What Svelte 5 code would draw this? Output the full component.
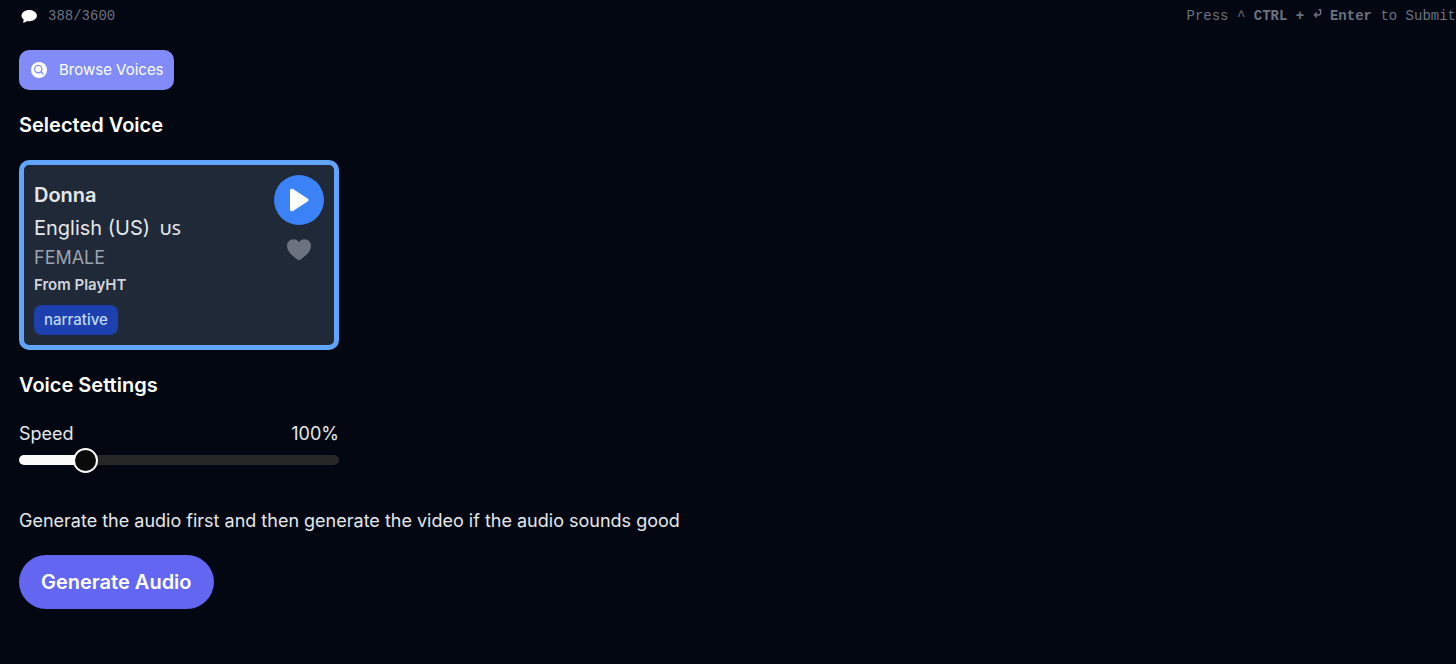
<script>
  let characters = 388;
  let maxCharacters = 3600;

  let voice = {
    name: "Donna",
    language: "English (US)",
    country: "US",
    gender: "FEMALE",
    provider: "PlayHT",
    tags: ["narrative"],
  };

  const minSpeed = 10;
  const maxSpeed = 500;
  let speed = 100;
  let liked = false;

  $: filled = ((speed - minSpeed) / (maxSpeed - minSpeed)) * 100;
</script>

<main>
  <div class="status">
    <span class="counter">
      <svg width="16" height="13" viewBox="0 0 16 13" fill="#fff" aria-hidden="true">
        <path
          d="M8.200 0C3.900 0 .5 2.500 .5 5.600C.5 7.200 1.300 8.500 2.600 9.500C2.700 10.700 2.300 11.700 1.800 12.600C3.600 12.600 5.100 11.800 6 10.900C6.700 11.100 7.400 11.200 8.200 11.200C12.500 11.200 15.900 8.700 15.900 5.600S12.500 0 8.200 0Z"
        />
      </svg>
      {characters}/{maxCharacters}
    </span>
    <span class="hint">
      Press <kbd>^ <b>CTRL</b></kbd> <b>+</b>
      <svg width="9" height="11" viewBox="0 0 9 11" fill="none" stroke="currentColor" stroke-width="1.4" aria-hidden="true">
        <path d="M5.500 .7H7.600V3.800Q7.600 6 5.400 6H1.500M4 3.500L1.400 6L4 8.500" />
      </svg>
      <kbd><b>Enter</b></kbd> to Submit
    </span>
  </div>

  <button class="browse">
    <svg width="16" height="16" viewBox="0 0 16 16" aria-hidden="true">
      <circle cx="8" cy="8" r="8" fill="#fff" />
      <g fill="none" stroke="#818cf8" stroke-width="1.3" stroke-linecap="round">
        <circle cx="7.2" cy="7.1" r="3.7" />
        <path d="M9.900 9.800L12 12" />
      </g>
    </svg>
    <span>Browse Voices</span>
  </button>

  <h2>Selected Voice</h2>

  <div class="card">
    <div class="info">
      <h3>{voice.name}</h3>
      <p class="language">{voice.language} <span>{voice.country}</span></p>
      <p class="gender">{voice.gender}</p>
      <p class="provider">From {voice.provider}</p>
      <div class="tags">
        {#each voice.tags as tag (tag)}
          <span class="tag">{tag}</span>
        {/each}
      </div>
    </div>
    <div class="actions">
      <button class="play" aria-label="Play sample">
        <svg width="20" height="24" viewBox="0 0 20 24" fill="#fff" aria-hidden="true">
          <path d="M1 2.6C1 1 2.7.3 4 1.1L18.600 10.400C19.900 11.200 19.900 12.800 18.600 13.600L4 22.900C2.700 23.700 1 23 1 21.400Z" />
        </svg>
      </button>
      <button class="like" class:liked aria-label="Favorite" on:click={() => (liked = !liked)}>
        <svg width="24" height="22" viewBox="0 0 24 22" fill="currentColor" aria-hidden="true">
          <path
            d="M12 21.500C11.500 21.500 8.500 19.300 6.300 17.300C2.500 14 0 11 0 7C0 3.200 2.800.3 6.500.3C8.800.3 10.800 1.400 12 3.200C13.200 1.400 15.200.3 17.500.3C21.200.3 24 3.200 24 7C24 11 21.500 14 17.700 17.300C15.500 19.300 12.500 21.500 12 21.500Z"
          />
        </svg>
      </button>
    </div>
  </div>

  <h2>Voice Settings</h2>

  <div class="setting">
    <div class="setting-label">
      <label for="speed">Speed</label>
      <output for="speed">{speed}%</output>
    </div>
    <input
      id="speed"
      type="range"
      min={minSpeed}
      max={maxSpeed}
      bind:value={speed}
      style="--filled: {filled}%"
    />
  </div>

  <p class="note">
    Generate the audio first and then generate the video if the audio sounds good
  </p>

  <button class="generate">Generate Audio</button>
</main>

<style>
  :global(body) {
    background: #030711;
  }
  main {
    padding: 5px 0 55px 19px;
    color: #e5e7eb;
    font-family: Inter, sans-serif;
    font-size: 18px;
    line-height: 28px;
  }
  h2,
  h3,
  p {
    margin: 0;
  }
  button {
    border: none;
    padding: 0;
    font-family: inherit;
    cursor: pointer;
  }
  svg {
    display: block;
    flex: none;
  }

  .status {
    display: flex;
    justify-content: space-between;
    color: #6b7280;
    font-family: "Liberation Mono", monospace;
    font-size: 14px;
    line-height: 22px;
    margin-bottom: 23px;
  }
  .counter {
    display: flex;
    align-items: center;
    gap: 11px;
    padding-left: 2px;
  }
  .hint svg {
    display: inline-block;
  }
  kbd {
    font-family: inherit;
  }

  .browse {
    display: flex;
    align-items: center;
    gap: 12px;
    height: 40px;
    padding: 0 10px 0 12px;
    border-radius: 10px;
    background: #818cf8;
    color: #fff;
    font-size: 15px;
    line-height: 20px;
  }
  h2 {
    margin: 20px 0;
    color: #fff;
    font-size: 20px;
    font-weight: 600;
    line-height: 30px;
  }

  .card {
    display: flex;
    justify-content: space-between;
    box-sizing: border-box;
    max-width: 320px;
    padding: 10px;
    border: 5px solid #60a5fa;
    border-radius: 10px;
    background: #1f2937;
  }
  .info {
    padding-top: 5px;
  }
  h3 {
    font-size: 20px;
    font-weight: 600;
    line-height: 30px;
  }
  .language {
    font-size: 20px;
    line-height: 36px;
  }
  .language span {
    margin-left: 4px;
    font-family: "Noto Sans", sans-serif;
    font-size: 20px;
    line-height: 20px;
    font-variant-caps: all-small-caps;
  }
  .gender {
    color: #9ca3af;
    line-height: 24px;
  }
  .provider {
    color: #d1d5db;
    font-size: 15px;
    font-weight: 600;
    line-height: 30px;
  }
  .tags {
    display: flex;
    gap: 5px;
    padding-top: 5px;
  }
  .tag {
    padding: 0 10px;
    border-radius: 8px;
    background: #1e40af;
    color: #bfdbfe;
    font-size: 15px;
    font-weight: 500;
    line-height: 30px;
  }
  .actions {
    display: flex;
    flex-direction: column;
    align-items: center;
    gap: 14px;
  }
  .play {
    display: flex;
    align-items: center;
    justify-content: center;
    width: 50px;
    height: 50px;
    border-radius: 50%;
    background: #3b82f6;
  }
  .like {
    background: none;
    color: #6b7280;
  }
  .like.liked {
    color: #ef4444;
  }

  .setting {
    max-width: 320px;
  }
  .setting-label {
    display: flex;
    justify-content: space-between;
  }
  input[type="range"] {
    display: block;
    appearance: none;
    width: 100%;
    height: 24px;
    margin: 0;
    background: none;
  }
  input[type="range"]::-webkit-slider-runnable-track {
    height: 10px;
    border-radius: 5px;
    background: linear-gradient(to right, #fafafa var(--filled), #262626 var(--filled));
  }
  input[type="range"]::-webkit-slider-thumb {
    appearance: none;
    box-sizing: border-box;
    width: 25px;
    height: 25px;
    margin-top: -7px;
    border: 2px solid #fafafa;
    border-radius: 50%;
    background: #0a0a0a;
  }

  .note {
    margin: 35px 0 20px;
  }
  .generate {
    height: 54px;
    padding: 0 22px;
    border-radius: 27px;
    background: #6366f1;
    color: #fff;
    font-size: 20px;
    font-weight: 600;
  }
</style>
